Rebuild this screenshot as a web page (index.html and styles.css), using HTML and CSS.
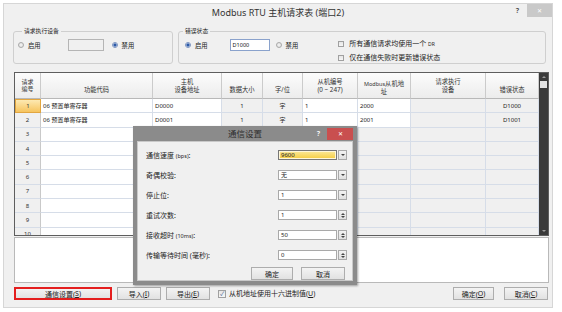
FILE: index.html
```html
<!DOCTYPE html>
<html lang="zh-CN">
<head>
<meta charset="utf-8">
<title>Modbus RTU 主机请求表 (端口2)</title>
<link rel="stylesheet" href="styles.css">
</head>
<body>
<div class="window">
  <div class="titlebar">
    <span></span>
    <span class="title">Modbus RTU 主机请求表 (端口2)</span>
    <span class="caption-btns"><span class="help">?</span><span class="close">✕</span></span>
  </div>

  <div class="groups">
    <fieldset class="group g1">
      <legend>请求执行设备</legend>
      <div class="grow">
        <span class="opt"><span class="radio"></span>启用</span>
        <span class="tbox off"></span>
        <span class="opt"><span class="radio on"></span>禁用</span>
      </div>
    </fieldset>
    <fieldset class="group g2">
      <legend>错误状态</legend>
      <div class="grow">
        <span class="opt"><span class="radio on"></span>启用</span>
        <span class="tbox act">D1000</span>
        <span class="opt"><span class="radio"></span>禁用</span>
        <div class="checks">
          <span class="chk"><span class="box"></span><span>所有通信请求均使用一个 <span class="dr">DR</span></span></span>
          <span class="chk"><span class="box"></span><span>仅在通信失败时更新错误状态</span></span>
        </div>
      </div>
    </fieldset>
  </div>

  <div class="main">
    <div class="table">
      <div class="grid">
        <div class="h hnum"><span>请求</span><span>编号</span></div>
        <div class="h low">功能代码</div>
        <div class="h"><span>主机</span><span>设备地址</span></div>
        <div class="h low">数据大小</div>
        <div class="h low">字/位</div>
        <div class="h"><span>从机编号</span><span>(0 ~ 247)</span></div>
        <div class="h mid"><span><span class="lat">Modbus</span>从机地</span><span>址</span></div>
        <div class="h top"><span>请求执行</span><span>设备</span></div>
        <div class="h low">错误状态</div>

        <div class="c num sel">1</div><div class="c w">06 预置单寄存器</div><div class="c w">D0000</div><div class="c ctr">1</div><div class="c ctr">字</div><div class="c w">1</div><div class="c w">2000</div><div class="c"></div><div class="c ctr">D1000</div>
        <div class="c num">2</div><div class="c w">06 预置单寄存器</div><div class="c w">D0001</div><div class="c ctr">1</div><div class="c ctr">字</div><div class="c w">1</div><div class="c w">2001</div><div class="c"></div><div class="c ctr">D1001</div>
        <div class="c num">3</div><div class="c w"></div><div class="c w"></div><div class="c"></div><div class="c"></div><div class="c"></div><div class="c"></div><div class="c"></div><div class="c"></div>
        <div class="c num">4</div><div class="c w"></div><div class="c w"></div><div class="c"></div><div class="c"></div><div class="c"></div><div class="c"></div><div class="c"></div><div class="c"></div>
        <div class="c num">5</div><div class="c w"></div><div class="c w"></div><div class="c"></div><div class="c"></div><div class="c"></div><div class="c"></div><div class="c"></div><div class="c"></div>
        <div class="c num">6</div><div class="c w"></div><div class="c w"></div><div class="c"></div><div class="c"></div><div class="c"></div><div class="c"></div><div class="c"></div><div class="c"></div>
        <div class="c num">7</div><div class="c w"></div><div class="c w"></div><div class="c"></div><div class="c"></div><div class="c"></div><div class="c"></div><div class="c"></div><div class="c"></div>
        <div class="c num">8</div><div class="c w"></div><div class="c w"></div><div class="c"></div><div class="c"></div><div class="c"></div><div class="c"></div><div class="c"></div><div class="c"></div>
        <div class="c num">9</div><div class="c w"></div><div class="c w"></div><div class="c"></div><div class="c"></div><div class="c"></div><div class="c"></div><div class="c"></div><div class="c"></div>
        <div class="c num">10</div><div class="c w"></div><div class="c w"></div><div class="c"></div><div class="c"></div><div class="c"></div><div class="c"></div><div class="c"></div><div class="c"></div>
      </div>
      <div class="vscroll">
        <span class="arr"><span class="tri up"></span></span>
        <span class="thumb"></span>
        <span class="track"></span>
        <span class="arr"><span class="tri dn"></span></span>
      </div>
    </div>

    <div class="log"></div>

    <div class="actions">
      <span class="btn red wide">通信设置(<u>S</u>)</span>
      <span class="btn w44">导入(<u>I</u>)</span>
      <span class="btn w44">导出(<u>E</u>)</span>
      <span class="chk hex"><span class="box on">✓</span><span>从机地址使用十六进制值(<u>U</u>)</span></span>
      <span class="spacer"></span>
      <span class="btn w41">确定(<u>O</u>)</span>
      <span class="btn w44">取消(<u>C</u>)</span>
    </div>
  </div>
</div>

<div class="dialog">
  <div class="dlg-title">
    <span></span>
    <span class="dlg-name">通信设置</span>
    <span class="dlg-btns"><span class="dlg-help">?</span><span class="dlg-close">✕</span></span>
  </div>
  <div class="dlg-body">
    <div class="frow"><span class="flabel">通信速度 <span class="lat">(bps)</span>:</span><span class="field"><span class="fval hl">9600</span><span class="drop"><span class="tri dn"></span></span></span></div>
    <div class="frow"><span class="flabel">奇偶校验:</span><span class="field"><span class="fval">无</span><span class="drop"><span class="tri dn"></span></span></span></div>
    <div class="frow"><span class="flabel">停止位:</span><span class="field"><span class="fval">1</span><span class="drop"><span class="tri dn"></span></span></span></div>
    <div class="frow"><span class="flabel">重试次数:</span><span class="field"><span class="fval">1</span><span class="spin"><span class="tri up"></span><span class="tri dn"></span></span></span></div>
    <div class="frow"><span class="flabel">接收超时 <span class="lat">(10ms)</span>:</span><span class="field"><span class="fval">50</span><span class="spin"><span class="tri up"></span><span class="tri dn"></span></span></span></div>
    <div class="frow"><span class="flabel">传输等待时间 (毫秒):</span><span class="field"><span class="fval">0</span><span class="spin"><span class="tri up"></span><span class="tri dn"></span></span></span></div>
    <div class="dlg-actions">
      <span class="btn w42">确定</span>
      <span class="btn w44">取消</span>
    </div>
  </div>
</div>
</body>
</html>
```

FILE: styles.css
```css
* { box-sizing: border-box; }

body {
  margin: 0;
  padding: 3px 0 0 3px;
  width: 562px;
  height: 312px;
  overflow: hidden;
  position: relative;
  background: #ffffff;
  font-family: "Noto Sans", "Noto Sans CJK SC", sans-serif;
  font-size: 7px;
  color: #222;
}

.window {
  width: 550px;
  height: 305px;
  border: 1px solid #d6d6d6;
  background: #f0f0f0;
  display: flex;
  flex-direction: column;
}

/* title bar */
.titlebar {
  height: 23px;
  display: grid;
  grid-template-columns: 1fr auto 1fr;
  align-items: start;
}
.title {
  font-size: 9px;
  line-height: 17px;
  color: #333;
}
.caption-btns {
  justify-self: end;
  display: flex;
  align-items: flex-start;
}
.help {
  font-size: 7px;
  font-weight: bold;
  color: #555;
  margin: 2px 8px 0 0;
  line-height: 9px;
}
.close {
  width: 25px;
  height: 13px;
  background: #c9c9c9;
  color: #fff;
  font-size: 6px;
  display: flex;
  align-items: center;
  justify-content: center;
}

/* group boxes */
.groups {
  display: flex;
  gap: 5px;
  padding: 0 6px 0 9px;
}
.group {
  margin: 0;
  height: 37px;
  padding: 0 4px;
  border: 1px solid #cfcfcf;
  border-radius: 3px;
  min-width: 0;
}
.group legend {
  font-size: 5.8px;
  line-height: 8px;
  padding: 0 2px;
  color: #222;
}
.g1 { width: 160px; }
.g1 legend { margin-left: 4px; }
.g2 { flex: 1; padding-left: 6px; }
.g2 legend { margin-left: -2px; }

.grow {
  display: flex;
  align-items: center;
  height: 14px;
  margin-top: 3px;
}
.opt {
  display: inline-flex;
  align-items: center;
  gap: 4px;
  font-size: 6.3px;
}
.radio {
  width: 6px;
  height: 6px;
  border-radius: 50%;
  border: 1px solid #a9a9a9;
  background: radial-gradient(circle, #f4f4f4, #dcdcdc);
}
.radio.on {
  background: radial-gradient(circle, #2c5aa8 0 1.4px, #e9eef7 1.8px);
  border-color: #7d95c0;
}
.tbox {
  height: 12px;
  border: 1px solid #b5b5b5;
  font-size: 5.5px;
  line-height: 10px;
  padding-left: 2px;
}
.tbox.off { width: 36px; background: #f0f0f0; margin: 0 8px 0 27px; }
.tbox.act { width: 40px; background: #fff; border-color: #8aa2cc; margin: 0 6px 0 22px; color: #111; }

.checks {
  display: flex;
  flex-direction: column;
  margin: -1px 0 0 40px;
  align-self: flex-start;
}
.chk {
  display: inline-flex;
  align-items: center;
  gap: 5px;
  font-size: 7px;
  line-height: 14px;
  white-space: nowrap;
}
.box {
  width: 6px;
  height: 6px;
  border: 1px solid #a0a0a0;
  background: linear-gradient(#e6e6e6, #f6f6f6);
  display: inline-flex;
  align-items: center;
  justify-content: center;
  font-size: 6px;
  color: #3c5a8c;
  line-height: 1;
}
.box.on { width: 8px; height: 8px; }
.dr { font-size: 5px; }

/* main area */
.main {
  display: flex;
  flex-direction: column;
  margin: 8px 3px 0 10px;
}

.table {
  display: flex;
  height: 164px;
  border: 1px solid #5e5e5e;
  background: #f0f0f0;
  overflow: hidden;
}
.grid {
  display: grid;
  grid-template-columns: 26px 112px 69px 41px 40px 55px 53px 75px 53px;
  grid-template-rows: 26px;
  grid-auto-rows: 14.3px;
  align-content: start;
}
.h {
  display: flex;
  flex-direction: column;
  align-items: center;
  justify-content: center;
  text-align: center;
  font-size: 6.3px;
  line-height: 7.6px;
  background: linear-gradient(#fcfcfc, #ececec);
  border-right: 1px solid #cbcbcb;
  border-bottom: 1px solid #b8b8b8;
  color: #333;
  white-space: nowrap;
}
.h.low { justify-content: flex-end; padding-bottom: 4px; }
.h.top { justify-content: flex-start; padding-top: 5px; }
.h.mid { justify-content: flex-end; padding-bottom: 2px; }
.hnum { font-size: 6px; line-height: 7px; }
.lat { font-size: 5.5px; }

.c {
  display: flex;
  align-items: center;
  padding: 0 2px;
  font-size: 6px;
  border-right: 1px solid #d6dde8;
  border-bottom: 1px solid #d6dde8;
  white-space: nowrap;
  overflow: hidden;
  color: #222;
}
.c.w { background: #fff; }
.c.ctr { justify-content: center; }
.c.num {
  justify-content: center;
  background: #f0f0f0;
  border-right-color: #c9c9c9;
  color: #333;
}
.c.num.sel {
  background: linear-gradient(#fde9b2, #f6c45e);
  border: 1px solid #e2a640;
}

.vscroll {
  width: 9px;
  background: #3a3a3a;
  display: flex;
  flex-direction: column;
}
.arr {
  height: 8px;
  display: flex;
  align-items: center;
  justify-content: center;
}
.thumb {
  height: 7px;
  margin: 0 1px;
  background: #e4e4e4;
}
.track { flex: 1; }

.tri {
  width: 0;
  height: 0;
  border-left: 2px solid transparent;
  border-right: 2px solid transparent;
}
.tri.up { border-bottom: 2px solid #9a9a9a; }
.tri.dn { border-top: 2px solid #9a9a9a; }

.log {
  height: 46px;
  margin-top: 1px;
  background: #fff;
  border: 1px solid #b9b9b9;
}

.actions {
  display: flex;
  align-items: center;
  height: 13px;
  margin-top: 4px;
  margin-right: 1px;
}
.btn {
  height: 13px;
  display: inline-flex;
  align-items: center;
  justify-content: center;
  border: 1px solid #adadad;
  background: linear-gradient(#f3f3f3, #e2e2e2);
  font-size: 7px;
  color: #222;
  white-space: nowrap;
}
.btn u, .chk u { text-decoration-thickness: 0.5px; text-underline-offset: 1px; }
.btn.wide { width: 98px; }
.btn.red { border: 2px solid #e41e1e; }
.btn.w41 { width: 41px; }
.btn.w42 { width: 42px; }
.btn.w44 { width: 44px; }
.actions .btn + .btn { margin-left: 5px; }
.actions .w41 + .w44 { margin-left: 10px; }
.chk.hex { margin-left: 8px; gap: 3px; }
.spacer { flex: 1; }

/* dialog overlay */
.dialog {
  position: absolute;
  left: 133px;
  top: 126px;
  width: 224px;
  height: 159px;
  background: #8b8b8b;
  padding: 0 4px 4px;
  display: flex;
  flex-direction: column;
  box-shadow: 1px 1px 2px rgba(0, 0, 0, 0.35);
}
.dlg-title {
  height: 15px;
  display: grid;
  grid-template-columns: 1fr auto 1fr;
  align-items: center;
}
.dlg-name {
  font-size: 8.5px;
  color: #2e2e2e;
  line-height: 15px;
}
.dlg-btns {
  justify-self: end;
  display: flex;
  align-items: center;
}
.dlg-help {
  font-size: 7px;
  font-weight: bold;
  color: #f4f4f4;
  margin-right: 7px;
}
.dlg-close {
  width: 26px;
  height: 12px;
  background: #c94f4f;
  color: #fff;
  font-size: 6px;
  display: flex;
  align-items: center;
  justify-content: center;
}
.dlg-body {
  flex: 1;
  background: #f0f0f0;
  border: 1px solid #c9c9c9;
  padding: 3px 5px 0 8px;
  display: flex;
  flex-direction: column;
}
.frow {
  height: 20px;
  display: flex;
  align-items: center;
  justify-content: space-between;
}
.flabel {
  font-size: 7px;
  color: #222;
}
.field {
  display: flex;
  width: 69px;
  height: 10px;
  gap: 1px;
}
.fval {
  flex: 1;
  border: 1px solid #a9a9a9;
  background: #fff;
  font-size: 6px;
  line-height: 8px;
  padding-left: 2px;
  color: #222;
}
.fval.hl {
  background: linear-gradient(#fbe99a, #f5cc3f);
  border-color: #777;
  box-shadow: inset 0 0 0 1px #fff7d8;
}
.drop, .spin {
  width: 9px;
  border: 1px solid #a9a9a9;
  background: linear-gradient(#f2f2f2, #e0e0e0);
  display: flex;
  flex-direction: column;
  align-items: center;
  justify-content: center;
  gap: 1px;
}
.drop .tri.dn, .spin .tri { border-top-color: #444; border-bottom-color: #444; }
.dlg-actions {
  display: flex;
  justify-content: flex-end;
  gap: 8px;
  margin-top: 2px;
  padding-right: 2px;
}
```
